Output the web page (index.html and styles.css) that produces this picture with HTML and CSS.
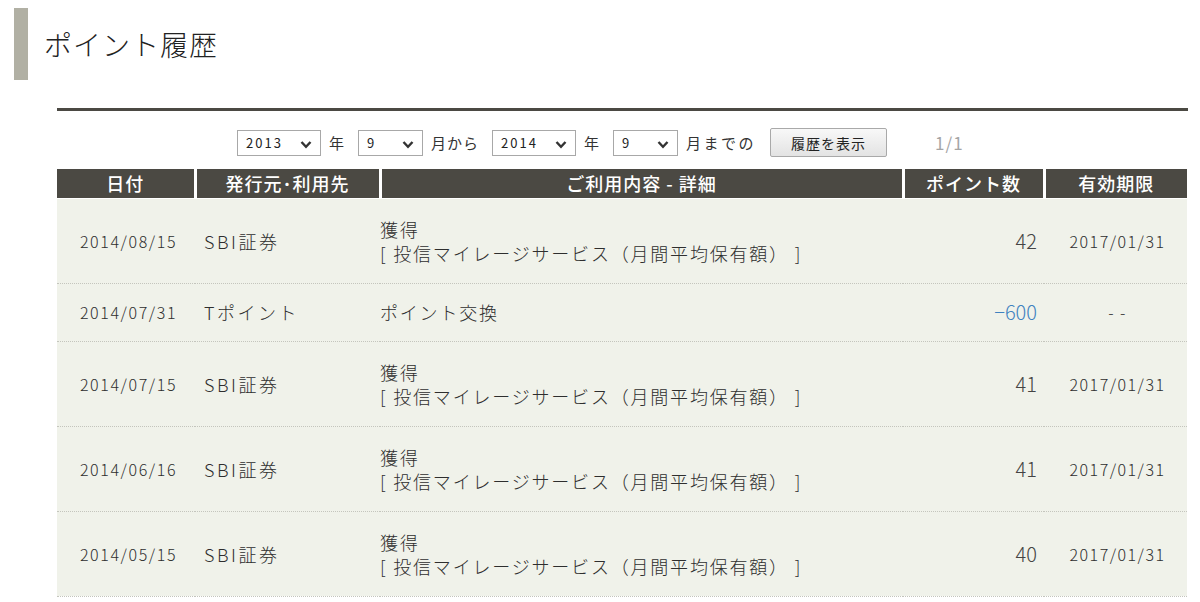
FILE: index.html
```html
<!DOCTYPE html>
<html lang="ja">
<head>
<meta charset="utf-8">
<title>ポイント履歴</title>
<link rel="stylesheet" href="styles.css">
</head>
<body>
<div class="page">
  <header class="page-title">
    <span class="title-bar"></span>
    <h1>ポイント履歴</h1>
  </header>

  <section class="history">
    <form class="filter">
      <span class="select sel-year"><span class="val">2013</span><svg class="chev" viewBox="0 0 12 9" width="12" height="9"><path d="M1.5 2 L6 6.8 L10.5 2" fill="none" stroke="#333" stroke-width="2.4"/></svg></span>
      <span class="lbl">年</span>
      <span class="select sel-month"><span class="val">9</span><svg class="chev" viewBox="0 0 12 9" width="12" height="9"><path d="M1.5 2 L6 6.8 L10.5 2" fill="none" stroke="#333" stroke-width="2.4"/></svg></span>
      <span class="lbl">月から</span>
      <span class="select sel-year"><span class="val">2014</span><svg class="chev" viewBox="0 0 12 9" width="12" height="9"><path d="M1.5 2 L6 6.8 L10.5 2" fill="none" stroke="#333" stroke-width="2.4"/></svg></span>
      <span class="lbl">年</span>
      <span class="select sel-month"><span class="val">9</span><svg class="chev" viewBox="0 0 12 9" width="12" height="9"><path d="M1.5 2 L6 6.8 L10.5 2" fill="none" stroke="#333" stroke-width="2.4"/></svg></span>
      <span class="lbl lbl-last">月までの</span>
      <button type="button" class="btn">履歴を表示</button>
      <span class="pager">1/1</span>
    </form>

    <table class="tbl">
      <thead>
        <tr>
          <th class="c-date">日付</th>
          <th class="c-pub">発行元･利用先</th>
          <th class="c-desc">ご利用内容 - 詳細</th>
          <th class="c-pt">ポイント数</th>
          <th class="c-exp">有効期限</th>
        </tr>
      </thead>
      <tbody>
        <tr class="tall">
          <td class="c-date">2014/08/15</td>
          <td class="c-pub">SBI証券</td>
          <td class="c-desc">獲得<br>[ 投信マイレージサービス（月間平均保有額） ]</td>
          <td class="c-pt">42</td>
          <td class="c-exp">2017/01/31</td>
        </tr>
        <tr class="short">
          <td class="c-date">2014/07/31</td>
          <td class="c-pub">Tポイント</td>
          <td class="c-desc">ポイント交換</td>
          <td class="c-pt minus">−600</td>
          <td class="c-exp">- -</td>
        </tr>
        <tr class="tall">
          <td class="c-date">2014/07/15</td>
          <td class="c-pub">SBI証券</td>
          <td class="c-desc">獲得<br>[ 投信マイレージサービス（月間平均保有額） ]</td>
          <td class="c-pt">41</td>
          <td class="c-exp">2017/01/31</td>
        </tr>
        <tr class="tall">
          <td class="c-date">2014/06/16</td>
          <td class="c-pub">SBI証券</td>
          <td class="c-desc">獲得<br>[ 投信マイレージサービス（月間平均保有額） ]</td>
          <td class="c-pt">41</td>
          <td class="c-exp">2017/01/31</td>
        </tr>
        <tr class="tall">
          <td class="c-date">2014/05/15</td>
          <td class="c-pub">SBI証券</td>
          <td class="c-desc">獲得<br>[ 投信マイレージサービス（月間平均保有額） ]</td>
          <td class="c-pt">40</td>
          <td class="c-exp">2017/01/31</td>
        </tr>
      </tbody>
    </table>
  </section>
</div>
</body>
</html>
```

FILE: styles.css
```css
* { box-sizing: border-box; }

html, body {
  margin: 0;
  padding: 0;
  background: #ffffff;
}

body {
  font-family: "Noto Sans CJK JP", "Noto Sans", sans-serif;
  color: #333;
  overflow: hidden;
}

.page {
  padding-top: 8px;
}

.page-title {
  display: flex;
  align-items: center;
  height: 72px;
  padding-left: 14px;
}

.title-bar {
  width: 14px;
  height: 72px;
  background: #b1b0a4;
}

.page-title h1 {
  margin: 0 0 0 16px;
  font-size: 28px;
  font-weight: 300;
  color: #222;
  letter-spacing: 1px;
  line-height: 1;
}

.history {
  margin: 28px 0 0 57px;
  width: 1131px;
  border-top: 3px solid #4b4943;
}

.filter {
  display: flex;
  align-items: center;
  height: 29px;
  margin: 17px 0 12px 0;
  padding-left: 180px;
  font-size: 15px;
  color: #333;
}

.select {
  display: inline-flex;
  align-items: center;
  justify-content: space-between;
  height: 26px;
  border: 1px solid #a8a8a8;
  background: #fff;
  padding: 0 8px 0 8px;
  font-size: 13px;
  letter-spacing: 2px;
  color: #222;
}

.sel-year { width: 84px; }
.sel-month { width: 65px; }

.chev { margin-top: 4px; }

.lbl {
  margin: 0 13px 0 8px;
  letter-spacing: 1px;
  white-space: nowrap;
}

.lbl-last {
  letter-spacing: 2.5px;
  margin-right: 14px;
}

.btn {
  width: 117px;
  height: 29px;
  border: 1px solid #a9a9a9;
  border-radius: 2px;
  background: linear-gradient(#f8f8f8, #e3e3e3);
  font-family: inherit;
  font-size: 14px;
  color: #222;
  letter-spacing: 1px;
  padding: 0;
}

.pager {
  margin-left: 48px;
  font-size: 17px;
  color: #a5a5a5;
  letter-spacing: 1px;
}

.tbl {
  width: 1130px;
  border-collapse: collapse;
  table-layout: fixed;
}

.tbl th {
  height: 29px;
  background: #4b4943;
  color: #fff;
  font-weight: 500;
  font-size: 18px;
  letter-spacing: 1px;
  text-align: center;
  padding: 0;
  border-left: 3px solid #fff;
  border-bottom: 1px solid #fff;
  line-height: 1;
}

.tbl th:first-child { border-left: 0; }

.tbl th.c-date { width: 138px; }
.tbl th.c-pub  { width: 185px; }
.tbl th.c-desc { width: 523px; }
.tbl th.c-pt   { width: 141px; }
.tbl th.c-exp  { width: 143px; }

.tbl td {
  background: #f0f2ea;
  border-bottom: 1px dotted #c4c5bd;
  padding: 0;
  font-size: 17px;
  line-height: 24px;
  color: #2e2e2e;
  vertical-align: middle;
  font-weight: 300;
}

.tbl tr.tall td { height: 85px; }
.tbl tr.short td { height: 58px; }

.tbl td.c-date {
  text-align: center;
  font-size: 16px;
  letter-spacing: 1.6px;
  padding-left: 5px;
}

.tbl td.c-pub {
  padding-left: 9px;
  font-size: 18px;
  letter-spacing: 2.5px;
}

.tbl td.c-desc {
  padding-left: 0;
  font-size: 18px;
  letter-spacing: 1.8px;
}

.tbl td.c-pt {
  text-align: right;
  padding-right: 7px;
  font-size: 20px;
  color: #444;
}

.tbl td.c-pt.minus { color: #3f82c0; }

.tbl td.c-exp {
  text-align: center;
  font-size: 16px;
  letter-spacing: 1.5px;
  padding-left: 4px;
}
```
